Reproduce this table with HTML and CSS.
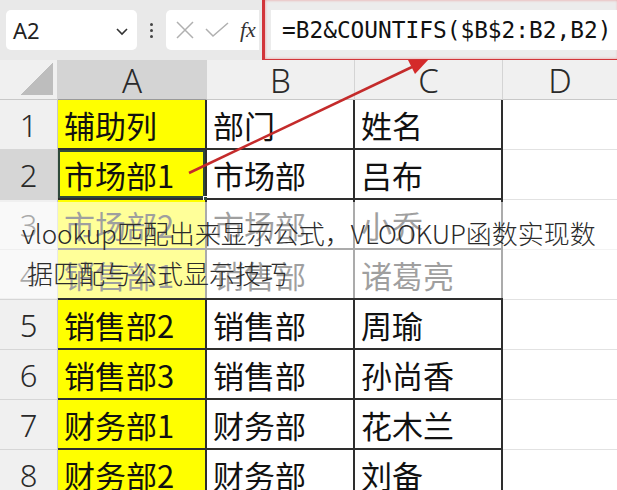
FILE: index.html
```html
<!DOCTYPE html>
<html>
<head>
<meta charset="utf-8">
<link rel="stylesheet" href="styles.css">
</head>
<body>
<div class="page">
  <div class="toolbar">
    <div class="namebox">
      <span class="ref">A2</span>
      <svg class="chev" width="14" height="10" viewBox="0 0 14 10"><path d="M2 3 L7 8 L12 3" fill="none" stroke="#333" stroke-width="1.6"/></svg>
    </div>
    <div class="dots"><i></i><i></i><i></i></div>
    <div class="fxbox">
      <svg width="22" height="22" viewBox="0 0 22 22"><path d="M3 3 L19 19 M19 3 L3 19" stroke="#b0b0b0" stroke-width="1.5" fill="none"/></svg>
      <svg width="26" height="22" viewBox="0 0 26 22"><path d="M2 10 L9 17 L24 4" stroke="#b0b0b0" stroke-width="1.5" fill="none"/></svg>
      <span class="fx">fx</span>
    </div>
    <div class="formula-wrap">
      <div class="formula">=B2&amp;COUNTIFS($B$2:B2,B2)</div>
    </div>
  </div>

  <div class="sheet">
    <div class="corner"><div class="tri"></div></div>
    <div class="colh sel">A</div>
    <div class="colh">B</div>
    <div class="colh">C</div>
    <div class="colh last">D</div>

    <div class="rowh">1</div>
    <div class="cell a">辅助列</div>
    <div class="cell">部门</div>
    <div class="cell">姓名</div>
    <div class="cell d"></div>

    <div class="rowh sel">2</div>
    <div class="cell a active">市场部1<span class="handle"></span></div>
    <div class="cell">市场部</div>
    <div class="cell">吕布</div>
    <div class="cell d"></div>

    <div class="rowh">3</div>
    <div class="cell a">市场部2</div>
    <div class="cell">市场部</div>
    <div class="cell">小乔</div>
    <div class="cell d"></div>

    <div class="rowh">4</div>
    <div class="cell a">销售部1</div>
    <div class="cell">销售部</div>
    <div class="cell">诸葛亮</div>
    <div class="cell d"></div>

    <div class="rowh">5</div>
    <div class="cell a">销售部2</div>
    <div class="cell">销售部</div>
    <div class="cell">周瑜</div>
    <div class="cell d"></div>

    <div class="rowh">6</div>
    <div class="cell a">销售部3</div>
    <div class="cell">销售部</div>
    <div class="cell">孙尚香</div>
    <div class="cell d"></div>

    <div class="rowh">7</div>
    <div class="cell a">财务部1</div>
    <div class="cell">财务部</div>
    <div class="cell">花木兰</div>
    <div class="cell d"></div>

    <div class="rowh">8</div>
    <div class="cell a">财务部2</div>
    <div class="cell">财务部</div>
    <div class="cell">刘备</div>
    <div class="cell d"></div>
  </div>

  <svg class="arrow" width="617" height="490" viewBox="0 0 617 490">
    <line x1="189" y1="173" x2="412" y2="67" stroke="#c42b2b" stroke-width="2.6"/>
    <polygon points="429,59 415,74 408,60" fill="#d42a2a"/>
  </svg>

  <div class="caption">
    <p>vlookup匹配出来显示公式，VLOOKUP函数实现数</p>
    <p>据匹配与公式显示技巧</p>
  </div>
</div>
</body>
</html>
```

FILE: styles.css
```css
* { box-sizing: border-box; }
html, body { margin: 0; padding: 0; }
body {
  width: 617px;
  height: 490px;
  overflow: hidden;
  background: #ffffff;
  font-family: "Noto Sans", "Noto Sans CJK SC", sans-serif;
}
.page {
  position: relative;
  width: 617px;
  height: 490px;
  overflow: hidden;
}

/* toolbar */
.toolbar {
  height: 60px;
  background: #e9e9e9;
  display: flex;
  align-items: center;
  padding-left: 6px;
}
.namebox {
  width: 131px;
  height: 40px;
  background: #fff;
  border-radius: 5px;
  display: flex;
  align-items: center;
  justify-content: space-between;
  padding: 0 8px 0 7px;
}
.ref {
  font-size: 22px;
  color: #222;
  font-family: "Noto Sans", sans-serif;
}
.chev { margin-top: 2px; }
.dots {
  width: 29px;
  display: flex;
  flex-direction: column;
  align-items: center;
  gap: 3px;
}
.dots i {
  display: block;
  width: 3px;
  height: 3px;
  border-radius: 50%;
  background: #444;
}
.fxbox {
  width: 93px;
  height: 40px;
  background: #fff;
  border-radius: 5px 0 0 5px;
  display: flex;
  align-items: center;
  gap: 8px;
  padding-left: 8px;
}
.fx {
  font-family: "Liberation Serif", "DejaVu Serif", serif;
  font-style: italic;
  font-size: 22px;
  color: #333;
  margin-left: 2px;
}
.formula-wrap {
  flex: 1;
  align-self: stretch;
  margin-top: -3px;
  margin-bottom: -2px;
  margin-right: -4px;
  margin-left: 3px;
  border: 3px solid #d2353a;
  box-shadow: inset 0 0 3px rgba(230, 90, 90, 0.6);
  background: #ececec;
  display: flex;
  align-items: center;
  padding-left: 6px;
}
.formula {
  flex: 1;
  height: 40px;
  background: #fff;
  display: flex;
  align-items: center;
  padding-left: 11px;
  font-family: "DejaVu Sans Mono", monospace;
  font-size: 22.8px;
  color: #111;
  white-space: nowrap;
}

/* sheet */
.sheet {
  display: grid;
  grid-template-columns: 58px 149px 148px 148px 1fr;
  grid-template-rows: 40px repeat(8, 50px);
}
.corner {
  background: #f0f0f0;
  border-right: 1px solid #d4d4d4;
  border-bottom: 1px solid #c8c8c8;
  display: flex;
  justify-content: flex-end;
  align-items: flex-end;
  padding: 0 4px 4px 0;
}
.tri {
  width: 32px;
  height: 32px;
  background: linear-gradient(135deg, transparent 50%, #bdbdbd 50%);
}
.colh {
  background: #f0f0f0;
  border-right: 1px solid #d4d4d4;
  border-bottom: 1px solid #c8c8c8;
  display: flex;
  align-items: center;
  justify-content: center;
  font-size: 33px;
  font-weight: 300;
  color: #2a2a2a;
  padding-top: 2px;
}
.colh.sel { background: #d4d4d4; border-bottom: 1px solid #9a9a9a; }
.colh.last { border-right: none; }
.rowh {
  background: #f0f0f0;
  border-right: 1px solid #c8c8c8;
  border-bottom: 1px solid #d6d6d6;
  display: flex;
  align-items: center;
  justify-content: center;
  font-size: 31px;
  font-weight: 300;
  color: #2a2a2a;
}
.rowh.sel { background: #d6d6d6; }
.cell {
  position: relative;
  background: #fff;
  border-right: 2px solid #2e2e2e;
  border-bottom: 2px solid #2e2e2e;
  display: flex;
  align-items: center;
  padding-left: 6px;
  font-family: "Noto Sans CJK SC", sans-serif;
  font-size: 31px;
  color: #111;
  white-space: nowrap;
  overflow: visible;
}
.cell.a { background: #ffff00; }
.cell.d {
  border-right: none;
  border-bottom: 1px solid #e2e2e2;
}
.cell.active {
  box-shadow: inset 0 0 0 2px #2f4a3a;
}
.handle {
  position: absolute;
  right: -5px;
  bottom: -5px;
  width: 7px;
  height: 7px;
  background: #2f4a3a;
  border: 1px solid #fff;
}

/* arrow overlay */
.arrow {
  position: absolute;
  left: 0;
  top: 0;
  pointer-events: none;
}

/* caption overlay */
.caption {
  position: absolute;
  left: 0;
  top: 202px;
  width: 617px;
  height: 96px;
  background: rgba(255, 255, 255, 0.6);
  padding: 11px 0 0 22px;
}
.caption p {
  margin: 0;
  font-family: "Noto Sans CJK SC", sans-serif;
  font-size: 26px;
  font-weight: 300;
  line-height: 40px;
  color: #2b2b2b;
  white-space: nowrap;
}
.caption p + p { padding-left: 5px; }
```
